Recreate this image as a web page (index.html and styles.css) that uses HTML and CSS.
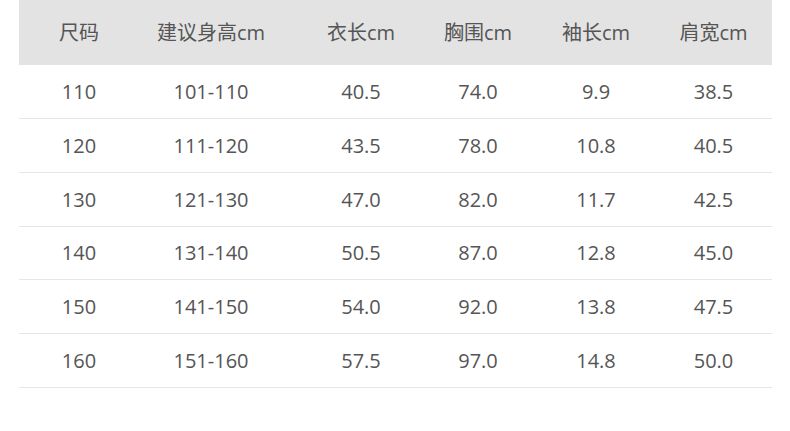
FILE: index.html
```html
<!DOCTYPE html>
<html>
<head>
<meta charset="utf-8">
<link rel="stylesheet" href="styles.css">
</head>
<body>
<div class="size-table">
  <div class="row head">
    <div class="c c1">尺码</div><div class="c c2">建议身高cm</div><div class="c c3">衣长cm</div><div class="c c4">胸围cm</div><div class="c c5">袖长cm</div><div class="c c6">肩宽cm</div>
  </div>
  <div class="row"><div class="c c1">110</div><div class="c c2">101-110</div><div class="c c3">40.5</div><div class="c c4">74.0</div><div class="c c5">9.9</div><div class="c c6">38.5</div></div>
  <div class="row"><div class="c c1">120</div><div class="c c2">111-120</div><div class="c c3">43.5</div><div class="c c4">78.0</div><div class="c c5">10.8</div><div class="c c6">40.5</div></div>
  <div class="row"><div class="c c1">130</div><div class="c c2">121-130</div><div class="c c3">47.0</div><div class="c c4">82.0</div><div class="c c5">11.7</div><div class="c c6">42.5</div></div>
  <div class="row"><div class="c c1">140</div><div class="c c2">131-140</div><div class="c c3">50.5</div><div class="c c4">87.0</div><div class="c c5">12.8</div><div class="c c6">45.0</div></div>
  <div class="row"><div class="c c1">150</div><div class="c c2">141-150</div><div class="c c3">54.0</div><div class="c c4">92.0</div><div class="c c5">13.8</div><div class="c c6">47.5</div></div>
  <div class="row"><div class="c c1">160</div><div class="c c2">151-160</div><div class="c c3">57.5</div><div class="c c4">97.0</div><div class="c c5">14.8</div><div class="c c6">50.0</div></div>
</div>
</body>
</html>
```
FILE: styles.css
```css
html, body {
  margin: 0;
  padding: 0;
  background: #ffffff;
}
body {
  font-family: "Open Sans", "Noto Sans CJK SC", sans-serif;
  color: #555555;
  font-size: 20px;
}
.size-table {
  margin-left: 19px;
  width: 753px;
}
.row {
  display: grid;
  grid-template-columns: 120px 144px 156px 78px 158px 97px;
  height: 53.85px;
  align-items: center;
  border-bottom: 1px solid #e6e6e6;
  box-sizing: border-box;
  padding-top: 1px;
}
.row.head {
  height: 65px;
  padding-top: 0;
  background: #e3e3e3;
  border-bottom: none;
}
.c {
  text-align: center;
  white-space: nowrap;
  line-height: 1;
}
.c6 {
  padding-right: 20px;
}
```
